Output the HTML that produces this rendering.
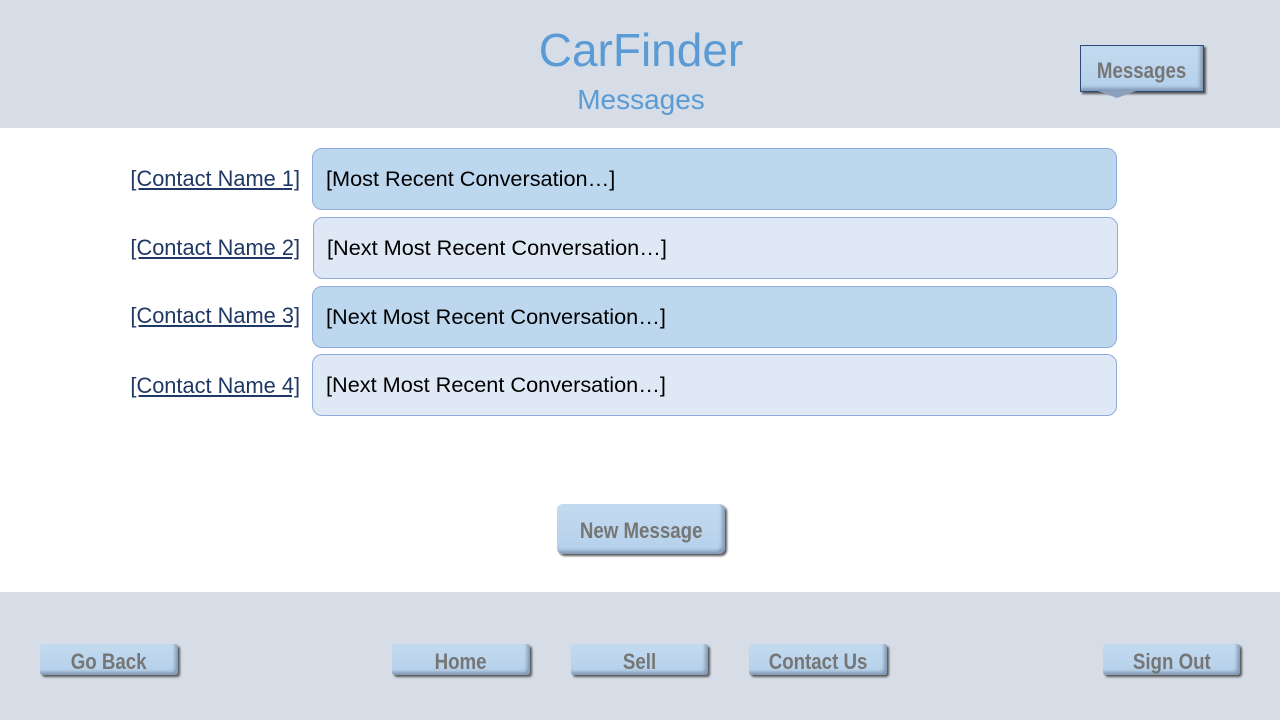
<!DOCTYPE html>
<html><head><style>
body{margin:0;width:1280px;height:720px;background:#fff;position:relative;overflow:hidden;font-family:"Liberation Sans",sans-serif}
.hdr{position:absolute;left:0;top:0;width:1280px;height:128px;background:#d6dde6}
.ftr{position:absolute;left:0;top:592px;width:1280px;height:128px;background:#d6dde6}
.t1{position:absolute;width:1280px;text-align:center;color:#5b9bd5;top:22px;font-size:46px;line-height:56px;left:1px}
.t2{position:absolute;left:0;width:1280px;text-align:center;color:#5b9bd5;top:83px;font-size:28px;line-height:34px;left:1px}
.btn{position:absolute;background:linear-gradient(#c3dbf0,#b5d0ea);border-radius:3px;box-shadow:2px 2px 2px #555, inset -3px -3px 3px rgba(80,100,130,.5);color:#767676;font-weight:bold;text-align:center;font-size:22px;white-space:nowrap}
.btn span{display:inline-block;transform:scaleX(0.85)}
.row{position:absolute;left:312px;border:1px solid #8faadc;border-radius:10px;font-size:21.7px;line-height:60px;padding-left:13px;box-sizing:border-box;width:805px;height:62px;color:#000}
.d{background:#bdd7ee}.l{background:#dee9f5}
.cn{position:absolute;right:980px;color:#1f3864;text-decoration:underline;font-size:21.8px;line-height:62px}
</style></head><body>
<div class="hdr"></div>
<div class="t1">CarFinder</div>
<div class="t2">Messages</div>
<div class="btn" style="left:1080px;top:45px;width:124px;height:47px;line-height:50px;border:1px solid #2f4a7a;border-radius:0;box-sizing:border-box"><span>Messages</span></div>
<svg style="position:absolute;left:1098px;top:91px" width="38" height="8"><path d="M0 0 L19 7 L38 0Z" fill="#8aa0bd"/></svg>
<div class="cn" style="top:148px">[Contact Name 1]</div>
<div class="row d" style="top:148px">[Most Recent Conversation…]</div>
<div class="cn" style="top:217px">[Contact Name 2]</div>
<div class="row l" style="top:217px;left:313px">[Next Most Recent Conversation…]</div>
<div class="cn" style="top:285px">[Contact Name 3]</div>
<div class="row d" style="top:286px">[Next Most Recent Conversation…]</div>
<div class="cn" style="top:355px">[Contact Name 4]</div>
<div class="row l" style="top:354px">[Next Most Recent Conversation…]</div>
<div class="btn" style="left:557px;top:504px;width:168px;height:50px;line-height:54px;border-radius:6px"><span>New Message</span></div>
<div class="ftr"></div>
<div class="btn" style="left:40px;top:644px;width:138px;height:31px;line-height:35px"><span>Go Back</span></div>
<div class="btn" style="left:392px;top:644px;width:138px;height:31px;line-height:35px"><span>Home</span></div>
<div class="btn" style="left:571px;top:644px;width:137px;height:31px;line-height:35px"><span>Sell</span></div>
<div class="btn" style="left:749px;top:644px;width:138px;height:31px;line-height:35px"><span>Contact Us</span></div>
<div class="btn" style="left:1103px;top:644px;width:137px;height:31px;line-height:35px"><span>Sign Out</span></div>
</body></html>
